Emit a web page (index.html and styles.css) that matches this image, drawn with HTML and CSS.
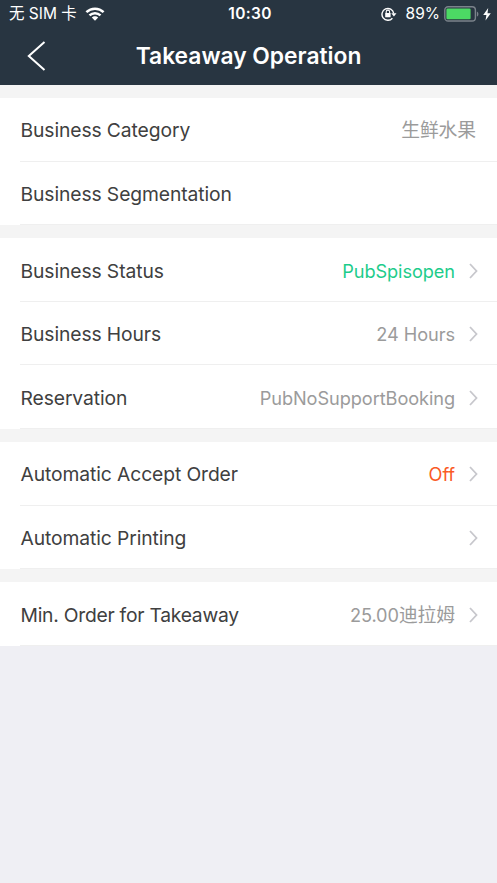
FILE: index.html
```html
<!DOCTYPE html>
<html lang="en">
<head>
<meta charset="utf-8">
<title>Takeaway Operation</title>
<link rel="stylesheet" href="styles.css">
</head>
<body>
<header class="header">
  <div class="status">
    <div class="status-left">
      <span class="carrier">无 SIM 卡</span>
      <svg class="wifi" width="20" height="14" viewBox="0 0 20 14" fill="none" stroke="#fff" stroke-width="2.5"><path d="M1.4 5.2C6.2.6 13.8.6 18.6 5.2"/><path d="M4.5 8.4c3.1-2.9 7.9-2.9 11 0"/><path d="M10 13.7 6.8 10.5c1.7-1.8 4.7-1.8 6.4 0z" fill="#fff" stroke="none"/></svg>
    </div>
    <span class="time">10:30</span>
    <div class="status-right">
      <svg class="lock" width="16" height="14" viewBox="0 0 16 14" fill="none" stroke="#fff" stroke-width="1.4"><path d="M11.4 11.2A5.9 5.9 0 1 1 12.7 6.4"/><path d="M10.3 6.2h5.2l-2.6 3.3z" fill="#fff" stroke="none"/><path d="M5.2 6.5V4.8a1.7 1.7 0 0 1 3.4 0v1.7" stroke-width="1.1"/><rect x="4.2" y="6" width="5.4" height="4.2" rx=".5" fill="#fff" stroke="none"/></svg>
      <span class="percent">89%</span>
      <svg class="battery" width="35" height="16" viewBox="0 0 35 16"><rect x=".8" y=".8" width="30.6" height="14.2" rx="3.3" fill="none" stroke="#7b838b" stroke-width="1.4"/><rect x="2.4" y="2.5" width="24.2" height="10.8" rx="1.2" fill="#4cd964"/><path d="M32.9 5.4c2 .8 2 4.4 0 5.2z" fill="#7b838b"/></svg>
      <svg class="bolt" width="8" height="13" viewBox="0 0 8 13"><path d="M5.2 0 .2 7.1h3.2L2.5 12.6 7.8 5.3H4.5z" fill="#fff"/></svg>
    </div>
  </div>
  <nav class="nav">
    <svg class="back" width="20" height="32" viewBox="0 0 20 32" fill="none" stroke="#fff" stroke-width="2"><path d="M17.5 2 1.8 16l15.7 14"/></svg>
    <h1 class="title">Takeaway Operation</h1>
  </nav>
</header>
<main class="list">
  <section class="group">
    <div class="row"><span class="label">Business Category</span><span class="value"><span class="cjk">生鲜水果</span></span></div>
    <div class="row"><span class="label">Business Segmentation</span></div>
  </section>
  <section class="group">
    <div class="row"><span class="label">Business Status</span><span class="value open">PubSpisopen</span><svg class="chevron" viewBox="0 0 9 16"><path d="M1 1l6.5 7L1 15"/></svg></div>
    <div class="row"><span class="label">Business Hours</span><span class="value">24 Hours</span><svg class="chevron" viewBox="0 0 9 16"><path d="M1 1l6.5 7L1 15"/></svg></div>
    <div class="row"><span class="label">Reservation</span><span class="value">PubNoSupportBooking</span><svg class="chevron" viewBox="0 0 9 16"><path d="M1 1l6.5 7L1 15"/></svg></div>
  </section>
  <section class="group">
    <div class="row"><span class="label">Automatic Accept Order</span><span class="value off">Off</span><svg class="chevron" viewBox="0 0 9 16"><path d="M1 1l6.5 7L1 15"/></svg></div>
    <div class="row"><span class="label">Automatic Printing</span><span class="value"></span><svg class="chevron" viewBox="0 0 9 16"><path d="M1 1l6.5 7L1 15"/></svg></div>
  </section>
  <section class="group">
    <div class="row"><span class="label tight">Min. Order for Takeaway</span><span class="value">25.00<span class="cjk">迪拉姆</span></span><svg class="chevron" viewBox="0 0 9 16"><path d="M1 1l6.5 7L1 15"/></svg></div>
  </section>
</main>
</body>
</html>
```
FILE: styles.css
```css
* { box-sizing: border-box; }
body {
  margin: 0;
  min-height: 883px;
  background: #efeff4;
  color: #404040;
  font-family: Inter, "Noto Sans CJK SC", sans-serif;
  font-size: 19.3px;
}
svg { display: block; flex: none; }
.header { height: 85px; background: #283541; color: #fff; }
.status {
  display: grid;
  grid-template-columns: 1fr auto 1fr;
  align-items: center;
  height: 27px;
  padding: 0 6px 0 9px;
  font-size: 15.5px;
  line-height: 28px;
}
.status-left, .status-right { display: flex; align-items: center; }
.status-left { gap: 8px; }
.status-right { justify-content: flex-end; }
.time { font-weight: 600; letter-spacing: .3px; }
.percent { margin: 0 4px 0 9px; }
.bolt { margin-left: 4px; }
.nav { position: relative; height: 57px; }
.back { position: absolute; left: 27px; top: 13px; }
.title {
  margin: 0;
  text-align: center;
  font-size: 22.8px;
  font-weight: 600;
  line-height: 57px;
}
.list { background: #f4f4f4; }
.group { padding-top: 13.2px; }
.row {
  display: flex;
  align-items: center;
  height: 63.5px;
  padding: 1px 19px 0 20.5px;
  background: linear-gradient(#efefef, #efefef) 20px 100% / 100% 1px no-repeat #fff;
}
.label { flex: 1; white-space: nowrap; letter-spacing: -.1px; }
.tight { letter-spacing: -.25px; }
.value {
  margin-right: 2px;
  color: #9b9b9b;
  font-size: 18.2px;
  line-height: 24px;
  letter-spacing: -.08px;
  white-space: nowrap;
}
.cjk { font-size: 18.8px; line-height: 1; }
.open { color: #1dcc8b; }
.off { color: #fa5a25; }
.chevron { width: 9px; height: 16px; margin-left: 12px; fill: none; stroke: #c7c7cc; stroke-width: 1.8; }
```
